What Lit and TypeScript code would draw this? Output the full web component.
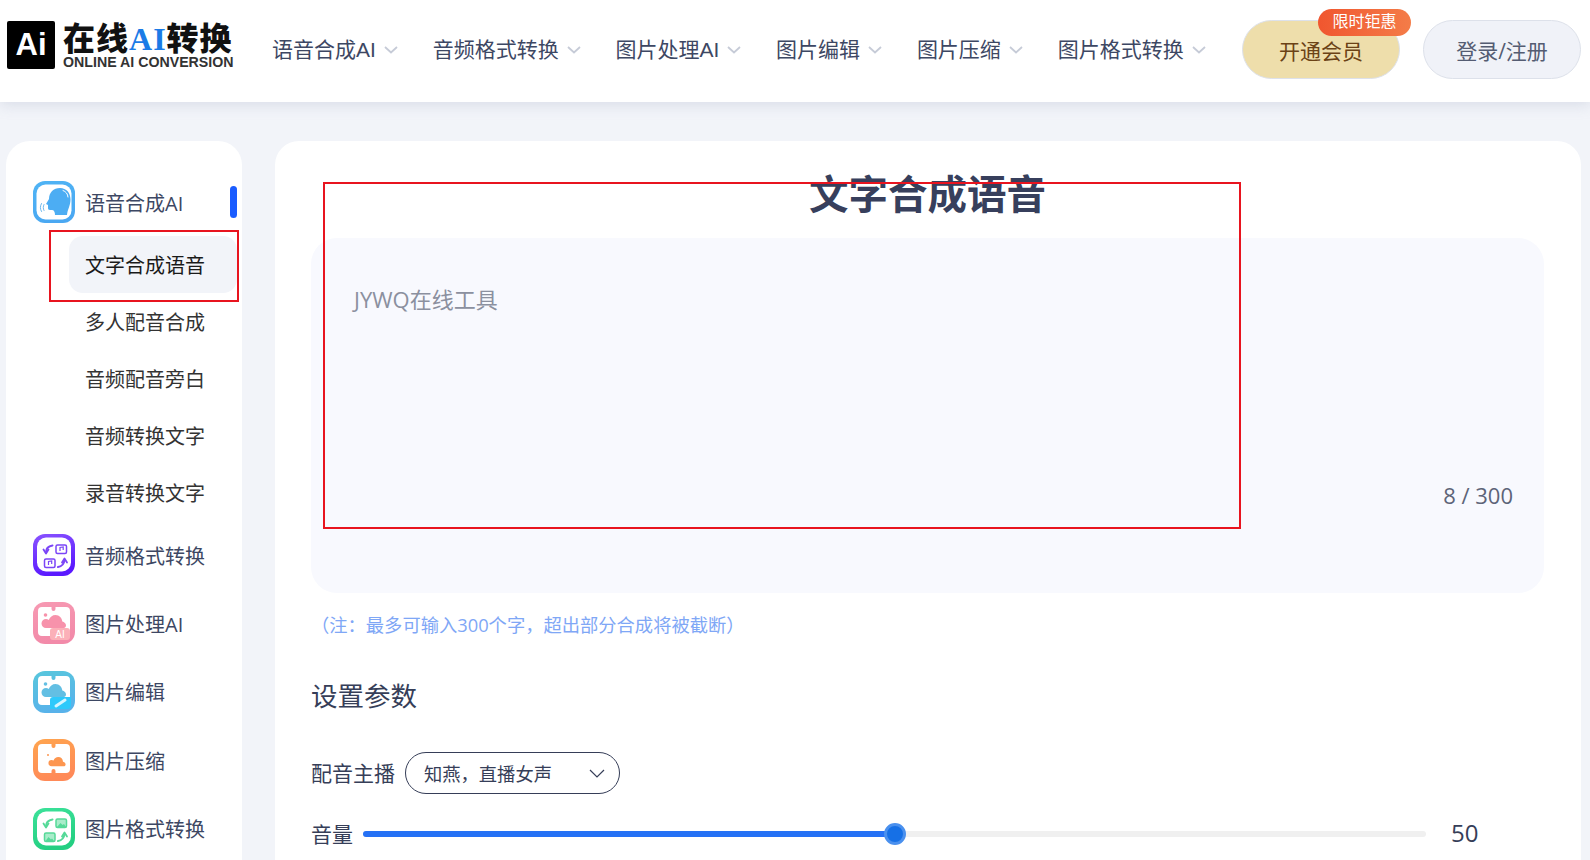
import { LitElement, html, css, svg } from "lit";
import { customElement } from "lit/decorators.js";

const frame = (id: string, a: string, b: string) => svg`
  <defs><linearGradient id=${id} x1="0" y1="0" x2="0.3" y2="1"><stop offset="0" stop-color=${a}/><stop offset="1" stop-color=${b}/></linearGradient></defs>
  <rect width="42" height="42" rx="12" fill="url(#${id})"/>`;

const speechIcon = html`<svg class="ico" viewBox="0 0 42 42">
  ${frame("g1", "#4fb4f5", "#4aa8f2")}
  <rect x="3.500" y="3.500" width="35" height="35" rx="9" fill="#fff"/>
  <path d="M27 7c6.500 0 10.500 5 10.500 11.500 0 6-3 10-3.500 15.500H22c0-3-1-5-3-5h-2c-1.500 0-2-1-2-2v-3l-2-1 3-5c0-6.500 4.500-11 11-11z" fill="#4cadf3"/>
  <path d="M30 9.500c3 1 4.800 3.500 5 6.500" fill="none" stroke="#fff" stroke-width="1" stroke-linecap="round"/>
  <path d="M11 23.500c-1 2-1 4 0 6M8.500 22.500c-1.500 2.500-1.500 5.500 0 8" fill="none" stroke="#6db9ee" stroke-width="1" stroke-linecap="round"/>
</svg>`;

const convertIcon = (id: string, a: string, b: string, c: string, soft: string, music: boolean) => html`<svg class="ico" viewBox="0 0 42 42">
  ${frame(id, a, b)}
  <rect x="4" y="3.500" width="34" height="34" rx="9" fill="#fff"/>
  <rect x="23" y="11" width="10.500" height="8.500" rx="1.500" fill=${music ? "#fff" : soft} stroke=${c} stroke-width="1.500"/>
  <rect x="11.500" y="25" width="10.500" height="8.500" rx="1.500" fill=${music ? "#fff" : soft} stroke=${c} stroke-width="1.500"/>
  ${music
    ? svg`<path d="M27 17v-3.500l3.200-.6v3M15.500 31v-3.500l3.200-.6v3" fill="none" stroke=${c} stroke-width="1.200"/>`
    : svg`<path d="M24 19l3.500-4 2 2 1.500-1 2 3zM12.500 33l3-4 2.500 2.500 1-1 2 2.500z" fill=${c}/>`}
  <path d="M19.500 11.500c-3.500.5-6.500 2.500-6.500 7" fill="none" stroke=${c} stroke-width="2" stroke-linecap="round"/>
  <path d="M10.500 15.500l2.500 4 2.500-4" fill="none" stroke=${c} stroke-width="1.800" stroke-linecap="round" stroke-linejoin="round"/>
  <path d="M25 33c3.500-.5 6-2.500 6.500-7" fill="none" stroke=${c} stroke-width="2" stroke-linecap="round"/>
  <path d="M29 28.500l2.500-4 2.500 4" fill="none" stroke=${c} stroke-width="1.800" stroke-linecap="round" stroke-linejoin="round"/>
</svg>`;

const cloud = "M13 26a4.500 4.500 0 0 1 0-9c1 0 2 .3 2.800 1 1-3 3.700-5 6.700-5 4 0 6.500 3 6.800 6.500 2 .5 3.700 2 3.700 4s-1.500 2.500-3 2.500z";

const imageShape = (c: string, notchBottom: boolean, small = false) => svg`
  <path d="M9 5h9.500v2a2 2 0 0 0 4 0V5H33a4 4 0 0 1 4 4v21a4 4 0 0 1-4 4H22.500${notchBottom ? "v-2a2 2 0 0 0-4 0v2" : ""}H9a4 4 0 0 1-4-4V9a4 4 0 0 1 4-4z" fill="#fff"/>
  <circle cx=${small ? 15 : 12.500} cy=${small ? 16 : 13} r=${small ? 1 : 1.800} fill=${c}/>
  <path d=${cloud} fill=${c} transform=${small ? "translate(9.500 9) scale(.7)" : ""}/>`;

const aiIcon = html`<svg class="ico" viewBox="0 0 42 42">
  ${frame("g3", "#f79ab3", "#f28aa9")}
  ${imageShape("#f792ab", false)}
  <rect x="17" y="26" width="20" height="12" rx="3" fill="#fbb0b8"/>
  <text x="27" y="35.500" class="ai">AI</text>
</svg>`;

const editIcon = html`<svg class="ico" viewBox="0 0 42 42">
  ${frame("g4", "#58c7dc", "#58b2ea")}
  ${imageShape("#63bfe3", false)}
  <path d="M17 29a3 3 0 0 1 3-3h18v8a4 4 0 0 1-4 4H17z" fill="#2ec9fb"/>
  <path d="M23 35l9-6" stroke="#d6f5ff" stroke-width="3" stroke-linecap="round"/>
</svg>`;

const compressIcon = html`<svg class="ico" viewBox="0 0 42 42">
  ${frame("g5", "#ffa54e", "#ff8a58")}
  ${imageShape("#fd9650", true, true)}
</svg>`;

const chevron = html`<svg class="chev" viewBox="0 0 14 8"><path d="M1 1l6 5.500L13 1" fill="none" stroke="#c6cbd7" stroke-width="1.800"/></svg>`;

const noteText = "\uFF08\u6CE8\uFF1A\u6700\u591A\u53EF\u8F93\u5165300\u4E2A\u5B57\uFF0C\u8D85\u51FA\u90E8\u5206\u5408\u6210\u5C06\u88AB\u622A\u65AD\uFF09";
const voiceText = "\u77E5\u71D5\uFF0C\u76F4\u64AD\u5973\u58F0";

const navItems = ["语音合成AI", "音频格式转换", "图片处理AI", "图片编辑", "图片压缩", "图片格式转换"];
const subItems = ["文字合成语音", "多人配音合成", "音频配音旁白", "音频转换文字", "录音转换文字"];
const sideItems = [
  ["音频格式转换", convertIcon("g2", "#8a54ff", "#5a18ff", "#7b45f7", "#fff", true)],
  ["图片处理AI", aiIcon],
  ["图片编辑", editIcon],
  ["图片压缩", compressIcon],
  ["图片格式转换", convertIcon("g6", "#3ce29a", "#24cf82", "#55d998", "#a9ecca", false)],
] as const;

@customElement("app-root")
export class AppRoot extends LitElement {
  static styles = css`
    :host {
      display: block;
      position: relative;
      width: 1590px;
      height: 860px;
      overflow: hidden;
      background: #f2f4f9;
      font-family: "Open Sans", "Noto Sans CJK SC", sans-serif;
      color: #3d4763;
    }
    .header {
      height: 102px;
      background: #fff;
      display: flex;
      align-items: center;
      box-shadow: 0 2px 14px rgba(150, 160, 185, 0.3);
      position: relative;
      padding-left: 7px;
    }
    .logo { display: flex; gap: 8px; align-items: flex-start; width: 265px; height: 48px; margin-bottom: 12px; }
    .logo-mark {
      width: 48px; height: 48px; background: #000; border-radius: 2px; color: #fff;
      display: flex; align-items: center; justify-content: center;
      font: bold 31px "Liberation Sans", sans-serif;
    }
    .logo-text { display: flex; flex-direction: column; margin-top: -1px; }
    .logo-cn {
      font: 900 32px/32px "Noto Sans CJK SC", sans-serif;
      color: #111; letter-spacing: 1px; white-space: nowrap;
    }
    .logo-cn b { font: bold 32px/32px "Liberation Serif", serif; color: #1b7be6; }
    .logo-en {
      font: bold 14.200px/14px "Liberation Sans", sans-serif; color: #333;
      white-space: nowrap;
    }
    .nav { display: flex; gap: 34.800px; width: 970px; margin-top: -2px; font-family: "Liberation Sans", "Noto Sans CJK SC", sans-serif; }
    .nav-item { display: flex; align-items: center; gap: 8px; font-size: 21px; white-space: nowrap; line-height: 28px; }
    .chev { width: 14px; height: 8px; }
    .btn {
      position: relative; width: 158px; height: 59px; box-sizing: border-box;
      border-radius: 30px; border: 1px solid #dde1ea; margin-top: -4px; padding-top: 2px;
      display: flex; align-items: center; justify-content: center; font-size: 21px;
    }
    .vip { background: #eedeab; color: #6b4216; }
    .login { background: #f0f2f8; color: #545c72; margin-left: 23px; }
    .badge {
      position: absolute; left: 75px; top: -12px; width: 93px; height: 27px;
      border-radius: 14px;
      background: linear-gradient(90deg, #f0562f, #f47c48);
      color: #fff; font-size: 16px; line-height: 25px; text-align: center;
    }
    .body { display: flex; gap: 33px; padding: 39px 0 0 6px; }
    .side {
      width: 236px; height: 760px; box-sizing: border-box; flex: none;
      background: #fff; border-radius: 24px 24px 0 0; padding-top: 40px;
    }
    .row { display: flex; align-items: center; gap: 10px; padding-left: 27px; height: 42px; font-size: 20px; white-space: nowrap; position: relative; }
    .ico { width: 42px; height: 42px; flex: none; }
    .ai { font: 10px "Liberation Sans", sans-serif; fill: #fff; text-anchor: middle; }
    .marker { position: absolute; left: 224px; top: 5px; width: 7px; height: 32px; border-radius: 4px; background: #1a5cff; }
    .subs { display: flex; flex-direction: column; padding: 13px 0 0 63px; }
    .sub { width: 168px; height: 57px; box-sizing: border-box; padding-left: 16px; display: flex; align-items: center; font-size: 20px; color: #333; border-radius: 14px; }
    .sub.on { background: #f2f4f9; color: #1a1a1a; }
    .rows { display: flex; flex-direction: column; gap: 26.400px; padding-top: 13px; }
    .main {
      width: 1306px; height: 760px; box-sizing: border-box; flex: none;
      background: #fff; border-radius: 24px 24px 0 0; padding: 22px 37px 0 36px;
    }
    h1 { margin: 0; font: bold 39.500px/58px "Noto Sans CJK SC", sans-serif; color: #373f5c; text-align: center; }
    .panel {
      margin-top: 17px; height: 355px; background: #f8f9fe; border-radius: 26px;
      display: flex; flex-direction: column; padding: 44px 31px 0 43px; box-sizing: border-box;
    }
    .placeholder { font-size: 22px; line-height: 34px; color: #8b909f; }
    .count { font-size: 22px; line-height: 30px; color: #5d6478; text-align: right; margin-top: 164px; }
    .note { margin: 19px 0 0; font-size: 18.300px; line-height: 26px; color: #7fa7f6; white-space: nowrap; }
    h2 { margin: 38px 0 0; font: 400 26.500px/40px "Open Sans", "Noto Sans CJK SC", sans-serif; color: #363e58; }
    .field { display: flex; align-items: center; font-size: 21px; color: #363e58; white-space: nowrap; }
    .lbl { margin-top: -2px; }
    .voice { margin-top: 36px; gap: 10px; }
    .select {
      width: 215px; height: 42px; box-sizing: border-box; border: 1px solid #363e58; border-radius: 21px;
      padding: 0 14px 0 18px; display: flex; align-items: center; justify-content: space-between; font-size: 18.300px;
    }
    .select svg { width: 16px; height: 9px; }
    .volume { margin-top: 20px; height: 40px; }
    .track { width: 1063px; height: 6px; margin: 0 0 0 10px; border-radius: 3px; background: #f0f0f0; position: relative; flex: none; }
    .fill { height: 6px; border-radius: 3px; background: #2571f5; }
    .thumb { position: absolute; top: -8px; width: 22px; height: 22px; margin-left: -11px; box-sizing: border-box; border-radius: 50%; background: #1670e6; border: 3px solid #4a90ee; }
    .val { font-size: 24px; margin: -4px 0 0 25px; }
    .mark { position: absolute; box-sizing: border-box; border: 2px solid #e8141f; pointer-events: none; }
    .m1 { left: 49px; top: 230px; width: 190px; height: 72px; }
    .m2 { left: 323px; top: 182px; width: 918px; height: 347px; }
  `;

  render() {
    const vol = 50;
    return html`
      <header class="header">
        <div class="logo">
          <div class="logo-mark">Ai</div>
          <div class="logo-text">
            <div class="logo-cn">在线<b>AI</b>转换</div>
            <div class="logo-en">ONLINE AI CONVERSION</div>
          </div>
        </div>
        <nav class="nav">
          ${navItems.map((n) => html`<div class="nav-item">${n}${chevron}</div>`)}
        </nav>
        <div class="btn vip">开通会员<span class="badge">限时钜惠</span></div>
        <div class="btn login">登录/注册</div>
      </header>
      <div class="body">
        <aside class="side">
          <div class="row">${speechIcon}<span>语音合成AI</span><i class="marker"></i></div>
          <div class="subs">
            ${subItems.map((s, i) => html`<div class="sub ${i === 0 ? "on" : ""}">${s}</div>`)}
          </div>
          <div class="rows">
            ${sideItems.map(([t, ic]) => html`<div class="row">${ic}<span>${t}</span></div>`)}
          </div>
        </aside>
        <main class="main">
          <h1>文字合成语音</h1>
          <div class="panel">
            <div class="placeholder">JYWQ在线工具</div>
            <div class="count">8 / 300</div>
          </div>
          <div class="note">${noteText}</div>
          <h2>设置参数</h2>
          <div class="field voice">
            <span class="lbl">配音主播</span>
            <div class="select"><span>${voiceText}</span>
              <svg viewBox="0 0 16 9"><path d="M1 1l7 7 7-7" fill="none" stroke="#363e58" stroke-width="1.200"/></svg>
            </div>
          </div>
          <div class="field volume">
            <span class="lbl">音量</span>
            <div class="track">
              <div class="fill" style="width:${vol}%"></div>
              <div class="thumb" style="left:${vol}%"></div>
            </div>
            <span class="val">${vol}</span>
          </div>
        </main>
      </div>
      <div class="mark m1"></div>
      <div class="mark m2"></div>
    `;
  }
}
